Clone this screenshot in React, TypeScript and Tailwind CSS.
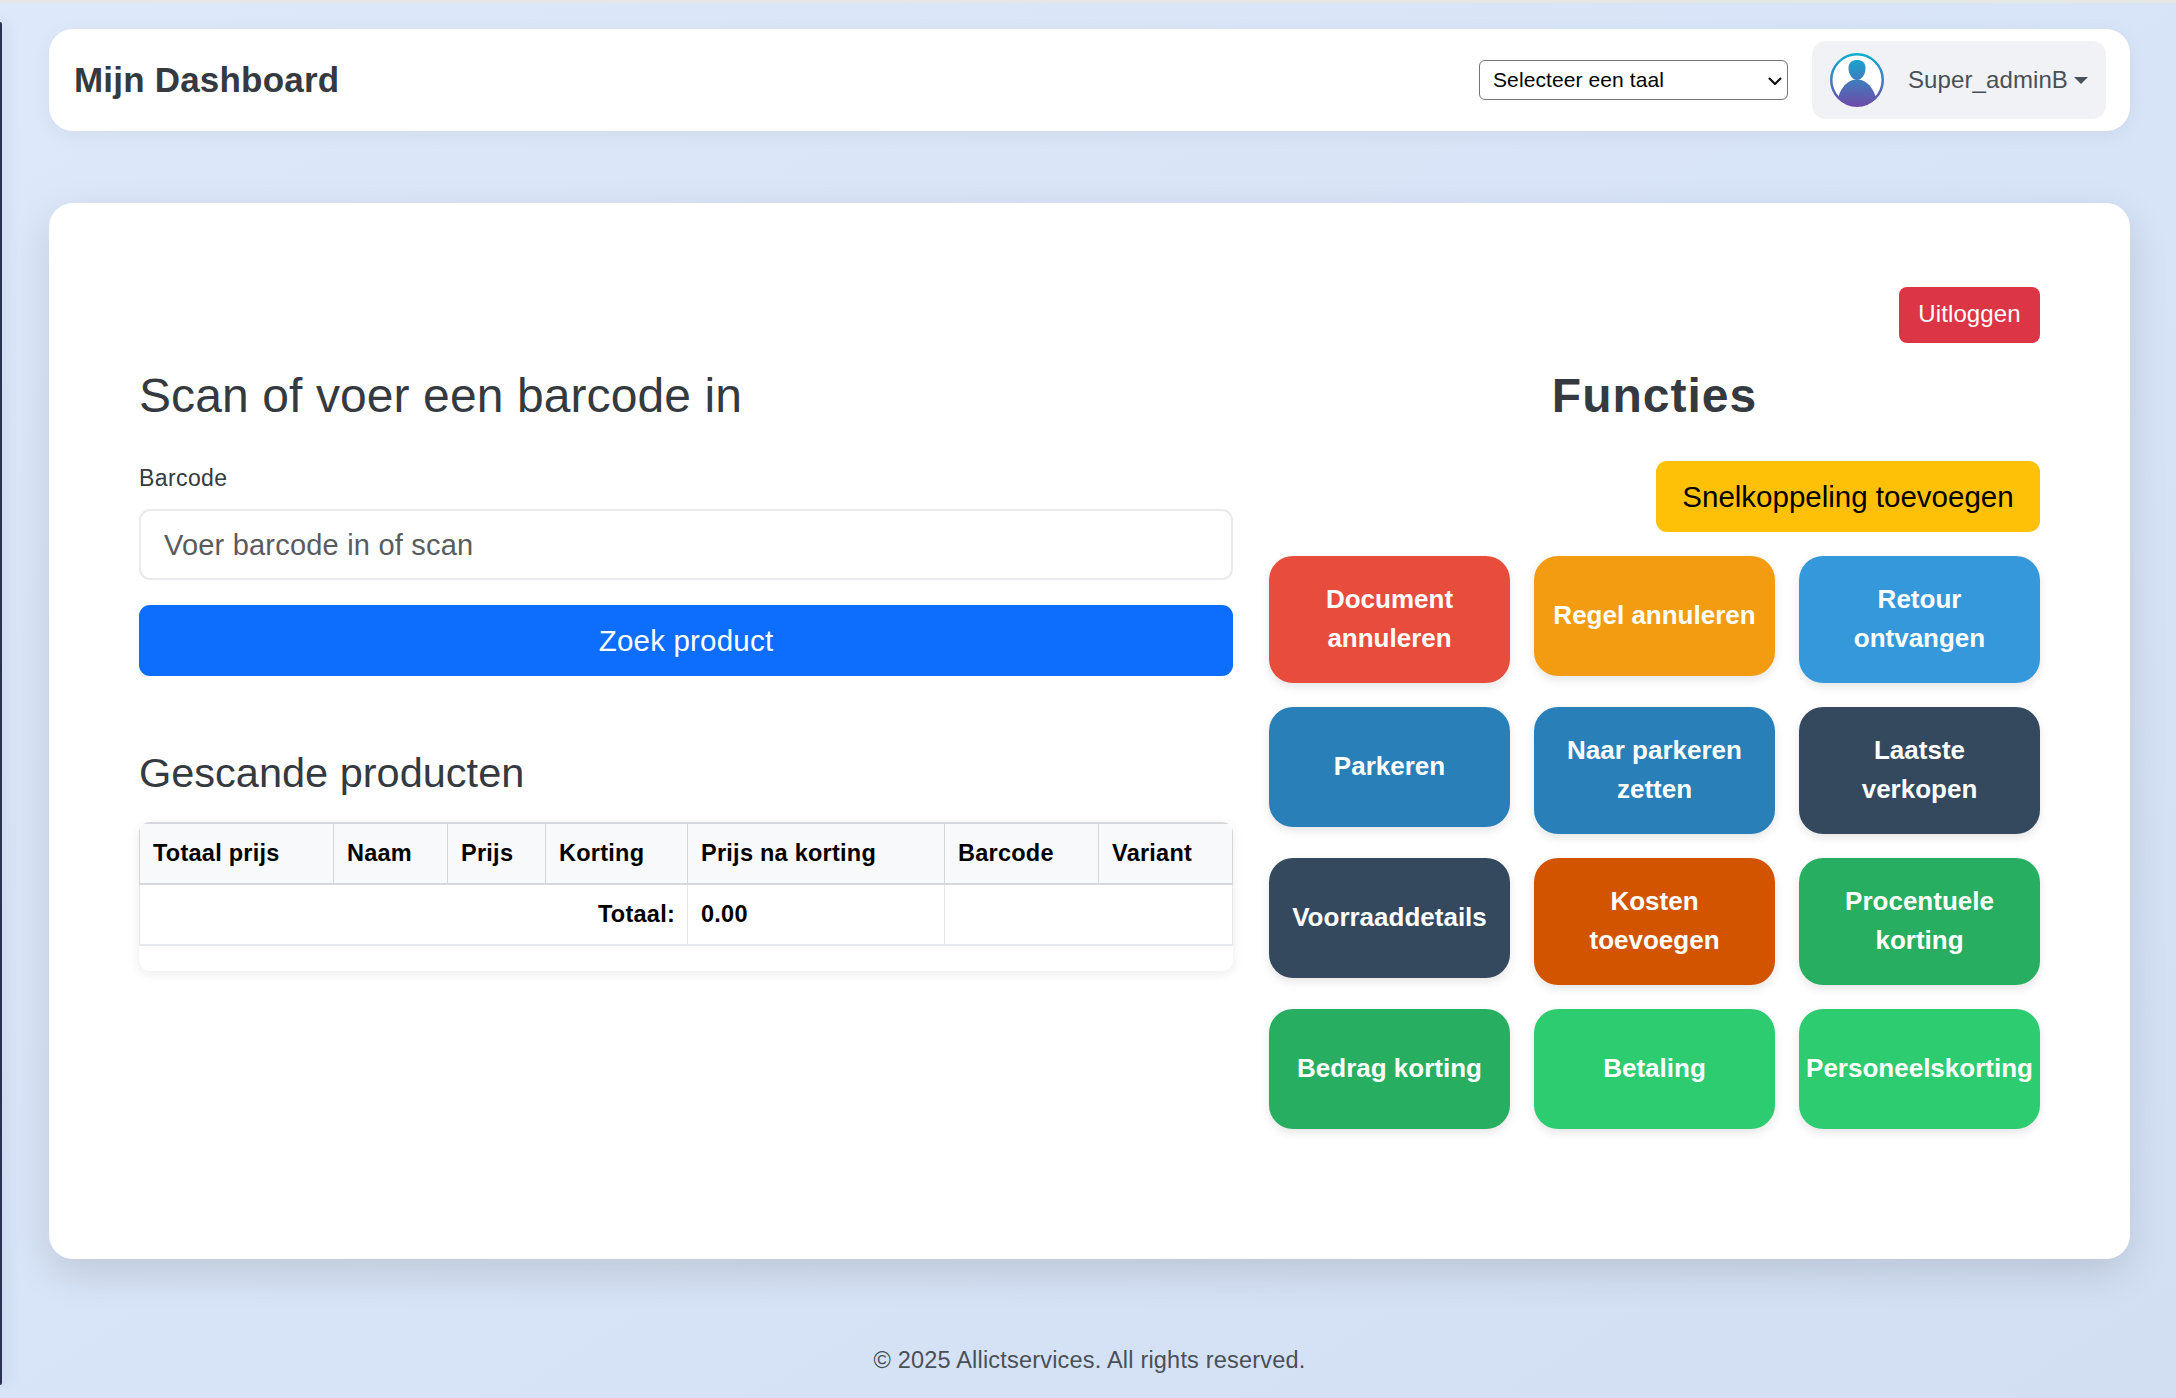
import React from "react";

const actions: { label: string[]; bg: string }[] = [
  { label: ["Document", "annuleren"], bg: "bg-[#e74c3c]" },
  { label: ["Regel annuleren"], bg: "bg-[#f39c12]" },
  { label: ["Retour", "ontvangen"], bg: "bg-[#3498db]" },
  { label: ["Parkeren"], bg: "bg-[#2980b9]" },
  { label: ["Naar parkeren", "zetten"], bg: "bg-[#2980b9]" },
  { label: ["Laatste", "verkopen"], bg: "bg-[#34495e]" },
  { label: ["Voorraaddetails"], bg: "bg-[#34495e]" },
  { label: ["Kosten", "toevoegen"], bg: "bg-[#d35400]" },
  { label: ["Procentuele", "korting"], bg: "bg-[#27ae60]" },
  { label: ["Bedrag korting"], bg: "bg-[#27ae60]" },
  { label: ["Betaling"], bg: "bg-[#2ecc71]" },
  { label: ["Personeelskorting"], bg: "bg-[#2ecc71]" },
];

function Avatar() {
  return (
    <svg width="54" height="54" viewBox="0 0 54 54" className="shrink-0">
      <defs>
        <linearGradient id="ag" x1="0" y1="0" x2="0" y2="54" gradientUnits="userSpaceOnUse">
          <stop offset="0" stopColor="#0fb0d2" />
          <stop offset="1" stopColor="#6f4aa8" />
        </linearGradient>
        <clipPath id="ac">
          <circle cx="27" cy="27" r="25.500" />
        </clipPath>
      </defs>
      <circle cx="27" cy="27" r="25.750" fill="#ffffff" stroke="url(#ag)" strokeWidth="2.500" />
      <g clipPath="url(#ac)" fill="url(#ag)">
        <path d="M18.5 15c0-5.5 3.5-8 8.5-8s8.5 2.500 8.500 8c0 6-3.500 12-8.500 12s-8.500-6-8.500-12z" />
        <path d="M7 54c0-14 8-27.500 20-27.500S47 40 47 54z" />
      </g>
    </svg>
  );
}

export default function App() {
  return (
    <div className="relative flex min-h-[1398px] flex-col overflow-hidden border-t-[3px] border-[#e6e6e6] bg-gradient-to-br from-[#dde8fa] to-[#d2dff3] pl-[49px] pr-[46px] pt-[26px] font-['Liberation_Sans',Arial,sans-serif] text-[#343a40]">
      <div className="absolute left-0 top-[19px] h-[1363px] w-[2px] rounded-r-sm bg-[#2b3152] shadow-[2px_0_14px_rgba(30,40,80,0.3)]" />

      <header className="flex h-[102px] items-center justify-between rounded-[24px] bg-white pl-[25px] pr-[24px] shadow-[0_4px_20px_rgba(0,0,0,0.05)]">
        <h1 className="pb-[2px] text-[35px] font-bold leading-none tracking-[0.2px]">Mijn Dashboard</h1>
        <div className="flex items-center gap-[24px]">
          <div className="relative">
            <select className="block h-[40px] w-[309px] appearance-none rounded-[6px] border border-[#767676] bg-white pl-[13px] text-[21px] tracking-[0.1px] text-black">
              <option>Selecteer een taal</option>
            </select>
            <svg width="14" height="8" viewBox="0 0 14 8" className="pointer-events-none absolute right-[6px] top-[17px]">
              <path d="M1 1l6 6 6-6" fill="none" stroke="#111" strokeWidth="2.200" />
            </svg>
          </div>
          <div className="flex h-[78px] w-[294px] items-center rounded-[14px] bg-[#f0f2f5] pl-[18px] text-[#495057]">
            <Avatar />
            <span className="ml-[24px] text-[24px] tracking-[0.1px]">Super_adminB</span>
            <svg width="14" height="7" viewBox="0 0 14 7" className="ml-[6px]">
              <path d="M0 0h14L7 7z" fill="#495057" />
            </svg>
          </div>
        </div>
      </header>

      <main className="mt-[72px] h-[1056px] rounded-[24px] bg-white px-[90px] pt-[84px] shadow-[0_14px_40px_rgba(0,0,0,0.12)]">
        <div className="flex justify-end">
          <button className="h-[56px] w-[141px] rounded-[8px] bg-[#dc3545] pb-[2px] text-[24px] tracking-[0.1px] text-white">Uitloggen</button>
        </div>
        <div className="mt-[24px] flex gap-[36px]">
          <section className="w-[1094px]">
            <h2 className="text-[48px] font-normal leading-[58px] tracking-[0.1px]">Scan of voer een barcode in</h2>
            <label className="mt-[36px] block text-[23px] leading-[34px] tracking-[0.4px]">Barcode</label>
            <input
              placeholder="Voer barcode in of scan"
              className="mt-[14px] block h-[71px] w-full rounded-[11px] border-2 border-[#e8eaed] bg-white px-[23px] pt-[2px] text-[29px] tracking-[0.2px] outline-none placeholder:text-[#595c5f]"
            />
            <button className="mt-[25px] block h-[71px] w-full rounded-[11px] bg-[#0d6efd] pt-[1px] text-[29.500px] tracking-[0.2px] text-white">Zoek product</button>
            <h3 className="mt-[72px] text-[41.500px] font-normal leading-[50px]">Gescande producten</h3>
            <div className="mt-[24px] overflow-hidden rounded-[11px] pb-[25px] shadow-[0_3px_12px_rgba(0,0,0,0.08)]">
              <table className="w-full table-fixed border-collapse text-[23.500px] tracking-[0.25px] text-black">
                <colgroup>
                  <col className="w-[194px]" />
                  <col className="w-[114px]" />
                  <col className="w-[98px]" />
                  <col className="w-[142px]" />
                  <col className="w-[257px]" />
                  <col className="w-[154px]" />
                  <col />
                </colgroup>
                <thead>
                  <tr className="h-[61px] bg-[#f8f9fa]">
                    {["Totaal prijs", "Naam", "Prijs", "Korting", "Prijs na korting", "Barcode", "Variant"].map((t) => (
                      <th key={t} className="border-x border-y-2 border-x-[#d4d6da] border-y-[#d6d8db] pl-[13px] pr-[12px] text-left font-bold">
                        {t}
                      </th>
                    ))}
                  </tr>
                </thead>
                <tbody>
                  <tr className="h-[61px] font-bold">
                    <td colSpan={4} className="border-x border-b-2 border-x-[#e4e6e9] border-b-[#e6e8eb] px-[12px] text-right">Totaal:</td>
                    <td className="border-x border-b-2 border-x-[#e4e6e9] border-b-[#e6e8eb] pl-[13px] pr-[12px] font-bold">0.00</td>
                    <td colSpan={2} className="border-x border-b-2 border-x-[#e4e6e9] border-b-[#e6e8eb]"></td>
                  </tr>
                </tbody>
              </table>
            </div>
          </section>

          <section className="w-[771px]">
            <h2 className="text-center text-[48px] font-bold leading-[58px] tracking-[1px]">Functies</h2>
            <div className="mt-[36px] flex justify-end">
              <button className="h-[71px] w-[384px] rounded-[11px] bg-[#ffc107] pt-[1px] text-[29.500px] text-black">Snelkoppeling toevoegen</button>
            </div>
            <div className="mt-[24px] grid grid-cols-3 items-start gap-[24px]">
              {actions.map((a) => (
                <button
                  key={a.label.join(" ")}
                  className={`flex min-h-[120px] flex-col items-center justify-center rounded-[24px] pb-[25px] pt-[24px] text-[26px] font-bold leading-[39px] text-white shadow-[0_4px_10px_rgba(0,0,0,0.1)] ${a.bg}`}
                >
                  {a.label.map((l) => (
                    <span key={l} className="whitespace-nowrap">{l}</span>
                  ))}
                </button>
              ))}
            </div>
          </section>
        </div>
      </main>

      <footer className="mt-[87px] text-center text-[23.500px] leading-[28px] tracking-[0.2px] text-[#495057]">
        © 2025 Allictservices. All rights reserved.
      </footer>
    </div>
  );
}
